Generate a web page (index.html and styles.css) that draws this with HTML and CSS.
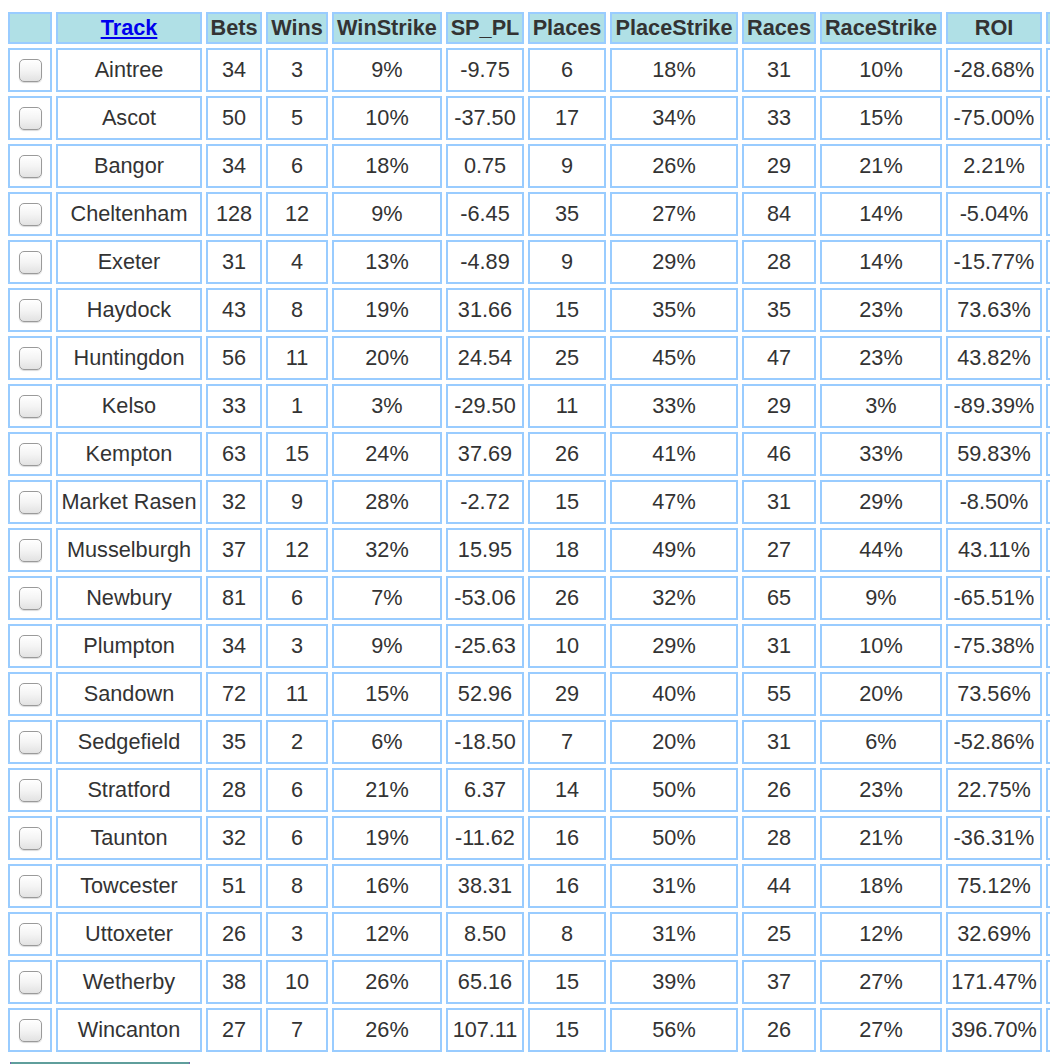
FILE: index.html
```html
<!DOCTYPE html>
<html>
<head>
<meta charset="utf-8">
<link rel="stylesheet" href="styles.css">
</head>
<body>
<div class="frame">
<table class="stats">
  <thead>
    <tr>
      <th class="c-chk"></th>
      <th class="c-track"><a href="#">Track</a></th>
      <th class="c-bets">Bets</th>
      <th class="c-wins">Wins</th>
      <th class="c-ws">WinStrike</th>
      <th class="c-sp">SP_PL</th>
      <th class="c-pl">Places</th>
      <th class="c-ps">PlaceStrike</th>
      <th class="c-races">Races</th>
      <th class="c-rs">RaceStrike</th>
      <th class="c-roi">ROI</th>
      <th class="c-extra"></th>
    </tr>
  </thead>
  <tbody id="rows"></tbody>
</table>
<div class="button-bar"></div>
</div>
<script src="script.js"></script>
</body>
</html>
```

FILE: styles.css
```css
html {
  overflow: hidden;
}
body {
  margin: 0;
  background: #ffffff;
  font-family: "Liberation Sans", Arial, Helvetica, sans-serif;
  color: #333333;
}
.frame {
  width: 1050px;
  overflow: hidden;
}
.stats {
  margin: 8px 0 0 4px;
  border-collapse: separate;
  border-spacing: 4px;
  table-layout: fixed;
  width: 1142px;
  font-size: 21.7px;
}
.stats th,
.stats td {
  border: 2px solid #99ccff;
  padding: 0;
  text-align: center;
  vertical-align: middle;
  white-space: nowrap;
  overflow: hidden;
}
.stats th {
  background: #b0e0e6;
  height: 28px;
  font-weight: bold;
  color: #333333;
  line-height: 28px;
}
.stats th a {
  color: #0000ee;
  text-decoration: underline;
}
.stats td {
  height: 40px;
  line-height: 28px;
}
.c-chk { width: 40px; }
.c-track { width: 142px; }
.c-bets { width: 52px; }
.c-wins { width: 58px; }
.c-ws { width: 106px; }
.c-sp { width: 74px; }
.c-pl { width: 74px; }
.c-ps { width: 124px; }
.c-races { width: 70px; }
.c-rs { width: 118px; }
.c-roi { width: 92px; }
.c-extra { width: 92px; }
.chk {
  -webkit-appearance: none;
  appearance: none;
  display: block;
  margin: 0 auto;
  width: 23px;
  height: 23px;
  border: 1px solid #9a9a9a;
  border-radius: 5px;
  background: linear-gradient(#ffffff 0%, #f4f4f4 50%, #e2e2e2 100%);
  box-shadow: inset 0 1px 1px rgba(255,255,255,0.9), 0 1px 1px rgba(0,0,0,0.15);
}
.button-bar {
  margin: 6px 0 0 10px;
  width: 180px;
  height: 20px;
  background: #5f9e9c;
  border-left: 1px solid #7a62b0;
  border-right: 1px solid #7a62b0;
  box-sizing: border-box;
}
```

FILE: script.js
```js
var data = [
  ["Aintree",34,3,"9%","-9.75",6,"18%",31,"10%","-28.68%"],
  ["Ascot",50,5,"10%","-37.50",17,"34%",33,"15%","-75.00%"],
  ["Bangor",34,6,"18%","0.75",9,"26%",29,"21%","2.21%"],
  ["Cheltenham",128,12,"9%","-6.45",35,"27%",84,"14%","-5.04%"],
  ["Exeter",31,4,"13%","-4.89",9,"29%",28,"14%","-15.77%"],
  ["Haydock",43,8,"19%","31.66",15,"35%",35,"23%","73.63%"],
  ["Huntingdon",56,11,"20%","24.54",25,"45%",47,"23%","43.82%"],
  ["Kelso",33,1,"3%","-29.50",11,"33%",29,"3%","-89.39%"],
  ["Kempton",63,15,"24%","37.69",26,"41%",46,"33%","59.83%"],
  ["Market Rasen",32,9,"28%","-2.72",15,"47%",31,"29%","-8.50%"],
  ["Musselburgh",37,12,"32%","15.95",18,"49%",27,"44%","43.11%"],
  ["Newbury",81,6,"7%","-53.06",26,"32%",65,"9%","-65.51%"],
  ["Plumpton",34,3,"9%","-25.63",10,"29%",31,"10%","-75.38%"],
  ["Sandown",72,11,"15%","52.96",29,"40%",55,"20%","73.56%"],
  ["Sedgefield",35,2,"6%","-18.50",7,"20%",31,"6%","-52.86%"],
  ["Stratford",28,6,"21%","6.37",14,"50%",26,"23%","22.75%"],
  ["Taunton",32,6,"19%","-11.62",16,"50%",28,"21%","-36.31%"],
  ["Towcester",51,8,"16%","38.31",16,"31%",44,"18%","75.12%"],
  ["Uttoxeter",26,3,"12%","8.50",8,"31%",25,"12%","32.69%"],
  ["Wetherby",38,10,"26%","65.16",15,"39%",37,"27%","171.47%"],
  ["Wincanton",27,7,"26%","107.11",15,"56%",26,"27%","396.70%"]
];
var tbody = document.getElementById("rows");
data.forEach(function (r) {
  var tr = document.createElement("tr");
  var td0 = document.createElement("td");
  var cb = document.createElement("input");
  cb.type = "checkbox";
  cb.className = "chk";
  td0.appendChild(cb);
  tr.appendChild(td0);
  r.forEach(function (v) {
    var td = document.createElement("td");
    td.textContent = v;
    tr.appendChild(td);
  });
  tr.appendChild(document.createElement("td"));
  tbody.appendChild(tr);
});
```
